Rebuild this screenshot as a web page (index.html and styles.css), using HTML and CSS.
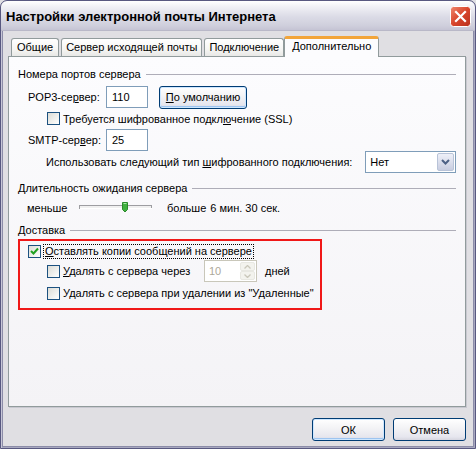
FILE: index.html
```html
<!DOCTYPE html>
<html>
<head>
<meta charset="utf-8">
<link rel="stylesheet" href="styles.css">
</head>
<body>
<div class="win">
  <div class="titlebar">
    <span class="title">Настройки электронной почты Интернета</span>
    <span class="close">
      <svg width="21" height="21" viewBox="0 0 21 21">
        <defs>
          <linearGradient id="cg" x1="0" y1="0" x2="1" y2="1">
            <stop offset="0" stop-color="#f08a70"/>
            <stop offset="0.5" stop-color="#d8442a"/>
            <stop offset="1" stop-color="#b8301e"/>
          </linearGradient>
        </defs>
        <rect x="0.5" y="0.5" width="20" height="20" rx="3" fill="url(#cg)" stroke="#ffffff"/>
        <path d="M6 6 L15 15 M15 6 L6 15" stroke="#ffffff" stroke-width="2.2" stroke-linecap="square"/>
      </svg>
    </span>
  </div>
  <div class="client">
    <div class="tabs">
      <div class="tab first">Общие</div>
      <div class="tab">Сервер исходящей почты</div>
      <div class="tab">Подключение</div>
      <div class="tab active">Дополнительно</div>
    </div>
    <div class="panel">
      <div class="ghead"><span>Номера портов сервера</span><i></i></div>
      <div class="row r-pop">
        <span class="lbl">POP3-се<u>р</u>вер:</span>
        <span class="edit">110</span>
        <span class="btn def"><span><u>П</u>о умолчанию</span></span>
      </div>
      <div class="row r-ssl">
        <span class="cb"></span>
        <span>Требуется шифрованное подкл<u>ю</u>чение (SSL)</span>
      </div>
      <div class="row r-smtp">
        <span class="lbl">SMTP-сер<u>в</u>ер:</span>
        <span class="edit">25</span>
      </div>
      <div class="row r-enc">
        <span class="enc">Использовать следующий тип <u>ш</u>ифрованного подключения:</span>
        <span class="combo"><span class="ctext">Нет</span><span class="cbtn"><svg width="9" height="6" viewBox="0 0 9 6"><path d="M1 1 L4.5 4.5 L8 1" fill="none" stroke="#4d6185" stroke-width="2"/></svg></span></span>
      </div>
      <div class="ghead g2"><span>Длительность ожидания сервера</span><i></i></div>
      <div class="row r-slider">
        <span class="less">меньше</span>
        <span class="slider">
          <svg width="74" height="14" viewBox="0 0 74 14">
            <rect x="0.5" y="4.5" width="72" height="3" fill="#f0f0f0" stroke="#9d9da1"/>
            <line x1="1" y1="7.5" x2="73" y2="7.5" stroke="#ffffff"/>
            <path d="M43.5 1.5 H48.5 V8.5 L46 11 L43.5 8.5 Z" fill="#3fb03f" stroke="#2a8a2a"/>
            <line x1="44.5" y1="2.5" x2="47.5" y2="2.5" stroke="#a8e8a8"/>
          </svg>
        </span>
        <span class="more">больше</span>
        <span>6 мин. 30 сек.</span>
      </div>
      <div class="ghead g3"><span>Доставка</span><i></i></div>
      <div class="redbox">
        <div class="row d1">
          <span class="cb checked"><svg width="11" height="11" viewBox="0 0 11 11"><path d="M2 5 L4.5 7.5 L9 2.5" fill="none" stroke="#21a121" stroke-width="2"/></svg></span>
          <span class="focus"><u>О</u>ставлять копии сообщений на сервере</span>
        </div>
        <div class="row d2">
          <span class="cb"></span>
          <span class="dtext"><u>У</u>далять с сервера через</span>
          <span class="spin"><span class="stext">10</span><span class="sbtns"><span class="sb"><svg width="7" height="4" viewBox="0 0 7 4"><path d="M0.5 3.5 L3.5 0.5 L6.5 3.5" fill="none" stroke="#c9c7ba" stroke-width="1.3"/></svg></span><span class="sb"><svg width="7" height="4" viewBox="0 0 7 4"><path d="M0.5 0.5 L3.5 3.5 L6.5 0.5" fill="none" stroke="#c9c7ba" stroke-width="1.3"/></svg></span></span></span>
          <span class="days">дней</span>
        </div>
        <div class="row d3">
          <span class="cb"></span>
          <span>У<u>д</u>алять с сервера при удалении из "Удаленные"</span>
        </div>
      </div>
    </div>
    <div class="buttons">
      <span class="btn wide def"><span>ОК</span></span>
      <span class="btn wide"><span>Отмена</span></span>
    </div>
  </div>
</div>
</body>
</html>
```
FILE: styles.css
```css
html, body {
  margin: 0;
  padding: 0;
  background: #e0dfe3;
}
body {
  font-family: "Liberation Sans", Arial, sans-serif;
  font-size: 11px;
  color: #000;
}
.win {
  width: 476px;
  height: 449px;
  box-sizing: border-box;
  border: 1px solid #585880;
  border-radius: 7px 7px 0 0;
  background: #e0dfe3;
  box-shadow: inset 1px 0 0 #c8c7d8, inset -1px 0 0 #a8a8c0, inset 0 -1px 0 #a8a8c0, inset 2px 0 0 #8c8ca8, inset -2px 0 0 #8c8ca8, inset 0 -2px 0 #8c8ca8;
  display: flex;
  flex-direction: column;
  overflow: hidden;
}
.titlebar {
  height: 29px;
  flex: none;
  display: flex;
  align-items: center;
  justify-content: space-between;
  padding: 0 4px 0 5px;
  background: linear-gradient(to bottom, #ffffff 0%, #f0f0f5 20%, #dbdbe6 55%, #cfcfdc 85%, #c5c4d4 100%);
  border-radius: 6px 6px 0 0;
  border-bottom: 1px solid #b9b8c8;
}
.title {
  font-weight: bold;
  font-size: 13px;
  color: #000;
  padding-top: 1px;
}
.close {
  display: flex;
  padding-top: 2px;
}
.client {
  flex: 1;
  display: flex;
  flex-direction: column;
  padding: 5px 9px 0 7px;
}
.tabs {
  display: flex;
  align-items: flex-end;
  height: 20px;
  padding-left: 3px;
  position: relative;
  z-index: 1;
}
.tab {
  height: 18px;
  box-sizing: border-box;
  border: 1px solid #919b9c;
  border-bottom: none;
  border-radius: 3px 3px 0 0;
  background: linear-gradient(to bottom, #ffffff, #f6f6f4 60%, #e8e8e6);
  padding: 0 4px;
  line-height: 17px;
  margin-right: 2px;
  white-space: nowrap;
}
.tab.first { padding: 0 5px; }
.tab.active {
  height: 21px;
  margin-left: -2px;
  margin-right: 0;
  padding: 0 7px;
  background: #fcfcfe;
  border-top: 3px solid #f2a53a;
  line-height: 15px;
  margin-bottom: -1px;
}
.panel {
  height: 351px;
  box-sizing: border-box;
  border: 1px solid #919b9c;
  background: linear-gradient(to bottom, #fcfcfe, #f4f3f6);
  padding: 10px 9px 0 9px;
  box-shadow: 1px 1px 0 #c8c8d0;
}
.ghead {
  display: flex;
  align-items: center;
  height: 14px;
}
.ghead i {
  flex: 1;
  height: 0;
  border-top: 1px solid #aeadb8;
  margin-left: 5px;
}
.g2 { margin-top: 8px; }
.g3 { margin-top: 5px; }
.row {
  display: flex;
  align-items: center;
  white-space: nowrap;
}
.r-pop { height: 22px; margin-top: 5px; padding-left: 10px; }
.r-ssl { height: 21px; padding-left: 29px; }
.r-smtp { height: 22px; padding-left: 10px; }
.r-enc { height: 22px; padding-left: 28px; }
.lbl { width: 78px; }
.edit {
  width: 42px;
  height: 22px;
  box-sizing: border-box;
  border: 1px solid #7f9db9;
  background: #fff;
  padding-left: 5px;
  line-height: 20px;
}
.btn {
  box-sizing: border-box;
  height: 23px;
  border: 1px solid #003c74;
  border-radius: 3px;
  background: linear-gradient(to bottom, #ffffff, #f4f4f6 40%, #e6e6ee 85%, #d6d6e0);
  display: flex;
  align-items: center;
  justify-content: center;
}
.btn.def {
  box-shadow: inset 0 0 0 1px #cee7ff, inset 0 -1px 0 1px #9dc4f0;
}
.r-pop .btn {
  margin-left: 11px;
  width: 88px;
}
.enc { width: 320px; }
.combo {
  width: 91px;
  height: 22px;
  box-sizing: border-box;
  border: 1px solid #7f9db9;
  background: #fff;
  display: flex;
  align-items: center;
  justify-content: space-between;
  padding: 1px;
}
.ctext { padding-left: 3px; }
.cbtn {
  width: 17px;
  height: 18px;
  box-sizing: border-box;
  border: 1px solid #b8c3d8;
  border-radius: 2px;
  background: linear-gradient(to bottom, #eef0f8, #c8cde0);
  display: flex;
  align-items: center;
  justify-content: center;
}
.r-slider { height: 20px; margin-top: 3px; padding-left: 9px; }
.less { width: 52px; }
.slider { display: flex; width: 88px; }
.more { margin-right: 4px; }
.redbox {
  margin-top: 2px;
  width: 304px;
  height: 71px;
  box-sizing: border-box;
  border: 2px solid #f01818;
  padding: 2px 0 0 8px;
}
.d1 { height: 16px; }
.d2 { height: 22px; margin-top: 1px; padding-left: 19px; }
.d3 { height: 18px; margin-top: 2px; padding-left: 19px; }
.cb {
  width: 13px;
  height: 13px;
  box-sizing: border-box;
  border: 1px solid #1c5180;
  background: linear-gradient(135deg, #dcdcd6, #ffffff);
  margin-right: 3px;
  flex: none;
  display: flex;
  align-items: center;
  justify-content: center;
}
.focus {
  outline: 1px dotted #000;
  padding: 0 1px;
  line-height: 13px;
}
.dtext { width: 141px; }
.spin {
  width: 53px;
  height: 22px;
  box-sizing: border-box;
  border: 1px solid #c9c7ba;
  background: #fff;
  display: flex;
  justify-content: space-between;
  padding: 1px;
  color: #aca899;
}
.stext { padding-left: 3px; line-height: 18px; }
.sbtns { display: flex; flex-direction: column; width: 15px; }
.sb {
  flex: 1;
  background: #f3f3ee;
  border: 1px solid #e8e8e2;
  border-radius: 2px;
  display: flex;
  align-items: center;
  justify-content: center;
}
.days { margin-left: 8px; }
.buttons {
  display: flex;
  justify-content: flex-end;
  gap: 8px;
  margin-top: 11px;
}
.btn.wide { width: 73px; }
```
